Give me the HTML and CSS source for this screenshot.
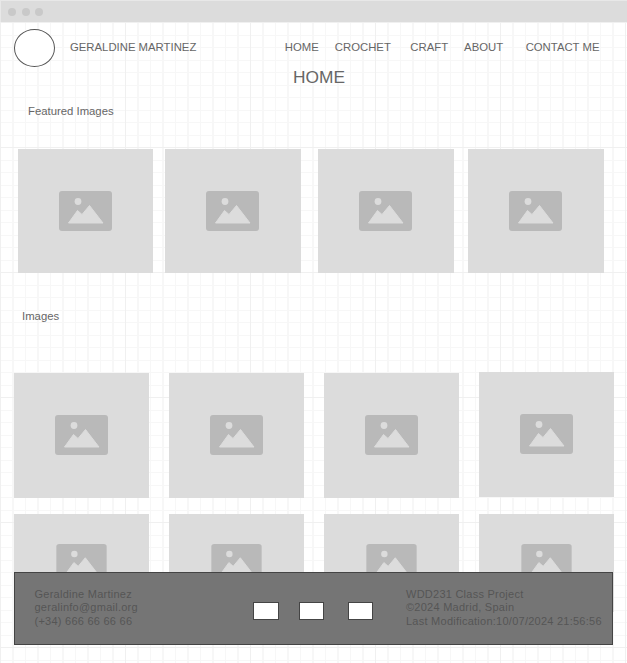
FILE: index.html
```html
<!DOCTYPE html>
<html>
<head>
<meta charset="utf-8">
<title>Geraldine Martinez</title>
<link rel="stylesheet" href="styles.css">
</head>
<body>
<svg class="defs" width="0" height="0">
  <symbol id="picture" viewBox="0 0 53 40">
    <rect width="53" height="40" rx="3" fill="#b9b9b9"/>
    <circle cx="19" cy="10.5" r="3.4" fill="#dcdcdc"/>
    <path d="M9.5 32 L18.5 19.5 L23 23.5 L30.5 14.5 L44 32 Z" fill="#dcdcdc" stroke="#dcdcdc" stroke-linejoin="round"/>
  </symbol>
</svg>
<div class="window">
  <div class="titlebar">
    <span class="dot"></span>
    <span class="dot"></span>
    <span class="dot"></span>
  </div>
  <div class="canvas">
    <header class="header">
      <div class="logo"></div>
      <div class="brand">GERALDINE MARTINEZ</div>
      <nav class="nav">
        <a>HOME</a>
        <a>CROCHET</a>
        <a>CRAFT</a>
        <a>ABOUT</a>
        <a>CONTACT ME</a>
      </nav>
    </header>
    <h1 class="page-title">HOME</h1>

    <h2 class="section-title featured-title">Featured Images</h2>
    <div class="row featured">
      <div class="pic"><svg class="icon"><use href="#picture"/></svg></div>
      <div class="pic"><svg class="icon"><use href="#picture"/></svg></div>
      <div class="pic"><svg class="icon"><use href="#picture"/></svg></div>
      <div class="pic"><svg class="icon"><use href="#picture"/></svg></div>
    </div>

    <h2 class="section-title images-title">Images</h2>
    <div class="row images">
      <div class="pic"><svg class="icon"><use href="#picture"/></svg></div>
      <div class="pic"><svg class="icon"><use href="#picture"/></svg></div>
      <div class="pic"><svg class="icon"><use href="#picture"/></svg></div>
      <div class="pic raised"><svg class="icon"><use href="#picture"/></svg></div>
    </div>
    <div class="row images second">
      <div class="pic"><svg class="icon small"><use href="#picture"/></svg></div>
      <div class="pic"><svg class="icon small"><use href="#picture"/></svg></div>
      <div class="pic"><svg class="icon small"><use href="#picture"/></svg></div>
      <div class="pic"><svg class="icon small"><use href="#picture"/></svg></div>
    </div>

    <footer class="footer">
      <div class="contact">
        <div>Geraldine Martinez</div>
        <div>geralinfo@gmail.org</div>
        <div>(+34) 666 66 66 66</div>
      </div>
      <div class="social">
        <span class="box"></span>
        <span class="box"></span>
        <span class="box"></span>
      </div>
      <div class="credits">
        <div>WDD231 Class Project</div>
        <div>©2024 Madrid, Spain</div>
        <div>Last Modification:10/07/2024 21:56:56</div>
      </div>
    </footer>
  </div>
</div>
</body>
</html>
```

FILE: styles.css
```css
html, body {
   margin: 0;
   height: 100%;
   overflow: hidden;
   background-color: white;
}

body {
   font-family: "Liberation Sans", Arial, sans-serif;
   color: #666;
}

.defs {
   position: absolute;
}

.window {
   display: flex;
   flex-direction: column;
   height: 663px;
   border-top: 1px solid #e8e8e8;
   border-left: 1px solid #e8e8e8;
   box-sizing: border-box;
}

.titlebar {
   display: flex;
   align-items: center;
   gap: 5.5px;
   flex: none;
   height: 21px;
   padding-left: 7px;
   background-color: #dcdcdc;
}

.dot {
   width: 8px;
   height: 8px;
   border-radius: 50%;
   background-color: #c9c9c9;
}

.canvas {
   position: relative;
   flex: 1;
   margin-left: -1px;
   overflow: hidden;
   background-image:
      repeating-linear-gradient(to right, #f0f0f0 0 1px, transparent 1px 125px),
      repeating-linear-gradient(to bottom, #f0f0f0 0 1px, transparent 1px 125px),
      repeating-linear-gradient(to right, #f7f7f7 0 1px, transparent 1px 12.5px),
      repeating-linear-gradient(to bottom, #f7f7f7 0 1px, transparent 1px 12.5px);
}

.header {
   display: flex;
   align-items: center;
   padding: 7px 0 0 14px;
}

.logo {
   flex: none;
   width: 39px;
   height: 36px;
   border: 1px solid #555;
   border-radius: 50%;
   background-color: white;
}

.brand {
   margin-left: 15px;
   margin-bottom: 2px;
   font-size: 11.33px;
}

.nav {
   display: flex;
   margin-left: 88.5px;
   margin-bottom: 2px;
   font-size: 11.33px;
}

.nav a:nth-child(2) { margin-left: 16px; }
.nav a:nth-child(3) { margin-left: 19.5px; }
.nav a:nth-child(4) { margin-left: 16px; }
.nav a:nth-child(5) { margin-left: 22.5px; }

.page-title {
   margin: 0;
   padding-left: 11px;
   font-size: 17.33px;
   font-weight: normal;
   line-height: 20px;
   text-align: center;
}

.section-title {
   margin: 0;
   font-size: 11.33px;
   font-weight: normal;
   line-height: 14px;
}

.featured-title {
   margin: 17px 0 0 28px;
}

.images-title {
   margin: 36px 0 0 22px;
}

.row {
   display: flex;
}

.pic {
   display: flex;
   flex: none;
   align-items: center;
   justify-content: center;
   width: 135px;
   background-color: #dcdcdc;
}

.raised {
   margin-top: -1px;
   margin-bottom: 1px;
}

.featured {
   height: 124px;
   margin-top: 31px;
   padding-left: 18px;
}

.featured .pic { width: 136px; }
.featured .pic:first-child { width: 135px; }
.featured .pic:nth-child(2) { margin-left: 12px; }
.featured .pic:nth-child(3) { margin-left: 17px; }
.featured .pic:nth-child(4) { margin-left: 14px; }
.featured .pic:not(:first-child) .icon { margin-right: 1px; }

.images {
   gap: 20px;
   height: 125px;
   margin-top: 50px;
   padding-left: 14px;
}

.second {
   height: 98px;
   margin-top: 16px;
}

.icon {
   width: 53px;
   height: 40px;
   margin-bottom: 1px;
}

.icon.small {
   width: 51px;
   height: 38px;
   margin-bottom: 0;
}

.footer {
   position: absolute;
   top: 550px;
   left: 14px;
   display: flex;
   align-items: center;
   width: 599px;
   height: 73px;
   box-sizing: border-box;
   border: 1px solid #444;
   background-color: #757575;
   color: #555;
   font-size: 11px;
   line-height: 13.3px;
   letter-spacing: 0.25px;
}

.contact {
   flex: none;
   width: 218px;
   margin-left: 19.5px;
   margin-bottom: 1px;
}

.social {
   display: flex;
   flex: none;
   width: 153.5px;
   margin-top: 5px;
}

.box {
   width: 23px;
   height: 16px;
   border: 1px solid #444;
   background-color: white;
}

.box:first-child { width: 24px; }
.box:nth-child(2) { margin-left: 20px; }
.box:nth-child(3) { margin-left: 24px; }

.credits {
   flex: none;
   margin-bottom: 1px;
   white-space: nowrap;
}
```
